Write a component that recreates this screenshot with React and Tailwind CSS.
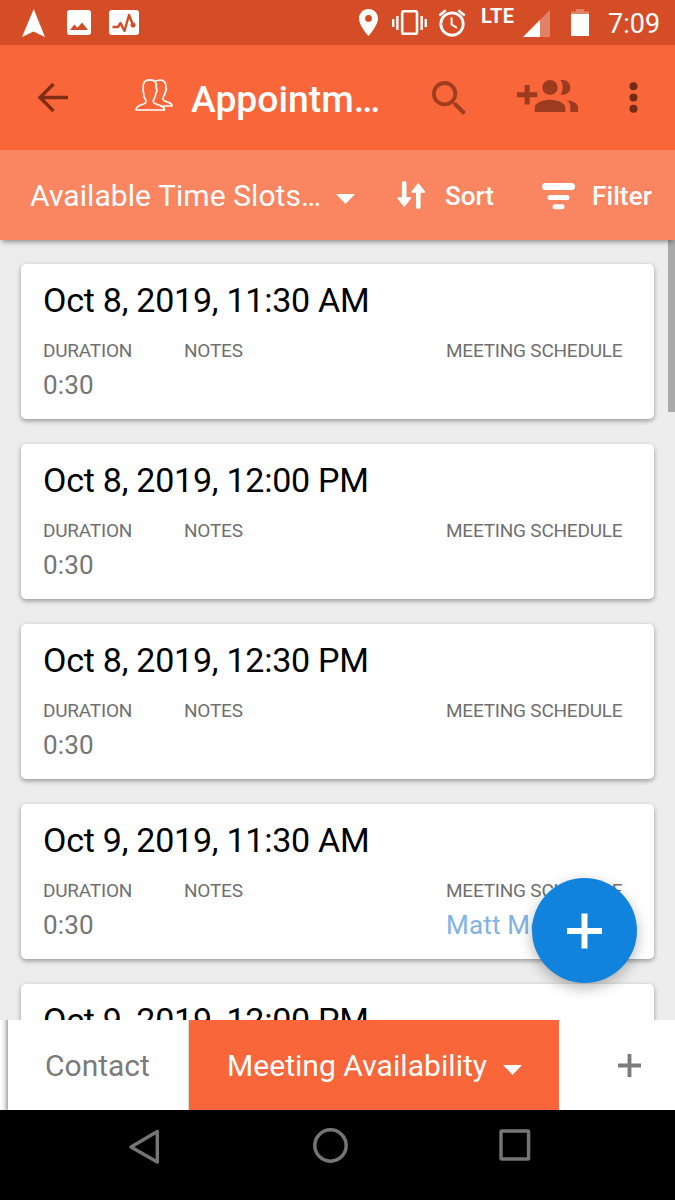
import React from "react";

const slots = [
  { title: "Oct 8, 2019, 11:30 AM", duration: "0:30" },
  { title: "Oct 8, 2019, 12:00 PM", duration: "0:30" },
  { title: "Oct 8, 2019, 12:30 PM", duration: "0:30" },
  { title: "Oct 9, 2019, 11:30 AM", duration: "0:30", schedule: "Matt Mo" },
  { title: "Oct 9, 2019, 12:00 PM" },
];

function StatusBar() {
  return (
    <div className="flex h-[45px] shrink-0 items-start bg-[#d54d26] text-white">
      <svg className="ml-[22px] mt-[9px] shrink-0" width="23" height="28" viewBox="0 0 23 28">
        <path d="M11.7 0L23 28L11.5 22.6L0 28Z" fill="currentColor" />
      </svg>
      <svg className="ml-[22px] mt-[10px] shrink-0" width="24" height="25" viewBox="0 0 24 25">
        <rect width="24" height="25" rx="3" fill="currentColor" />
        <path d="M3 20L7.3 14.6L10.6 17.8L15 12.6L21 20Z" fill="#d54d26" />
      </svg>
      <svg className="ml-[18px] mt-[10px] shrink-0" width="30" height="25" viewBox="0 0 30 25">
        <rect width="30" height="25" rx="3" fill="currentColor" />
        <path d="M3.5 17H9L11.5 13L15.5 21L20 5L24 15" fill="none" stroke="#d54d26" strokeWidth="2.4" strokeLinejoin="round" />
        <circle cx="24" cy="15" r="2.5" fill="#d54d26" />
      </svg>
      <svg className="ml-[220px] mt-[9px] shrink-0" width="19" height="27" viewBox="5 2 14 20" preserveAspectRatio="none">
        <path d="M12 2C8.13 2 5 5.13 5 9c0 5.25 7 13 7 13s7-7.75 7-13c0-3.87-3.13-7-7-7zm0 9.5a2.5 2.5 0 1 1 0-5 2.5 2.5 0 0 1 0 5z" fill="currentColor" />
      </svg>
      <svg className="ml-[14px] mt-[10px] shrink-0" width="35" height="25" viewBox="0 0 35 25">
        <rect x="10.2" y="1.2" width="14.8" height="22.6" rx="1.6" fill="none" stroke="currentColor" strokeWidth="2.6" />
        <path d="M1.2 9V17M5.4 6V20M29.7 6V20M33.8 9V17" stroke="currentColor" strokeWidth="2.4" />
      </svg>
      <svg className="ml-[11px] mt-[9px] shrink-0" width="28" height="28" viewBox="0 0 28 28">
        <circle cx="14" cy="15" r="11.2" fill="none" stroke="currentColor" strokeWidth="2.8" />
        <path d="M1.3 6.5L7.8 1.2M26.7 6.5L20.2 1.2" stroke="currentColor" strokeWidth="2.5" />
        <path d="M13.6 8.5V15.5L19 18.8" fill="none" stroke="currentColor" strokeWidth="2" />
      </svg>
      <span className="ml-[15px] mt-[6px] w-[42px] shrink-0 whitespace-nowrap text-[20px] font-bold leading-[21px] tracking-[0.4px]">LTE</span>
      <svg className="mt-[10px] shrink-0" width="27" height="27" viewBox="0 0 27 27">
        <path d="M27 0V27H0Z" fill="#fff" fillOpacity="0.3" />
        <path d="M17 10V27H0Z" fill="currentColor" />
      </svg>
      <svg className="ml-[21px] mt-[9px] shrink-0" width="18" height="27" viewBox="0 0 18 27">
        <path d="M5 0H13V2.5H18V5H0V2.5H5Z" fill="#fff" fillOpacity="0.3" />
        <path d="M0 5H18V27H0Z" fill="currentColor" />
      </svg>
      <span className="ml-[19px] mt-[9px] whitespace-nowrap text-[27px] leading-[30px]">7:09</span>
    </div>
  );
}

function AppBar() {
  return (
    <div className="flex h-[105px] shrink-0 items-start bg-[#f8663a]">
      <svg className="ml-[37px] mt-[38px] shrink-0" width="31" height="29" viewBox="0 0 31 29">
        <path d="M31 14.5H3M16.5 1L3 14.5L16.5 28" fill="none" stroke="#812d14" strokeWidth="3.4" />
      </svg>
      <svg className="ml-[66px] mt-[33px] shrink-0" width="40" height="35" viewBox="0 0 40 35" fill="none" stroke="#fff" strokeWidth="1.7" strokeLinejoin="round">
        <path d="M2 32C2 29 4 27.500 9.500 26C12.500 25 12.500 23 11 20.500C9.400 19 9.500 17 9.700 15C8.300 13 9 11.500 9.300 10C8.800 4.500 11 1.800 15.700 1.800C21 1.800 23 4.500 22.300 10C23.200 11.500 23 14 21.800 15C21.800 17 21.500 19 20.200 20.500C18.500 23 19 25 22 26C28 27.800 30.500 29 30.500 32Z" />
        <path d="M21 3.500C22.500 2.500 24 2 26 2C30.500 2 32.300 5 31.800 9.500C32.500 11 32.300 13 31.200 14C31.200 16 30.500 17.500 29.500 18.500C28.300 21 29 22.500 32 23.500C36 24.800 38 25.500 38 28H29" />
      </svg>
      <span className="ml-[17px] mt-[33px] w-[241px] shrink-0 whitespace-nowrap text-[37.300px] font-medium leading-[42px] text-white">Appointm…</span>
      <svg className="mt-[36px] shrink-0" width="34" height="34" viewBox="3 3 17.49 17.49">
        <path d="M15.5 14h-.79l-.28-.27A6.471 6.471 0 0 0 16 9.5 6.500 6.500 0 1 0 9.500 16c1.610 0 3.090-.59 4.230-1.570l.27.28v.79l5 4.990L20.490 19l-4.990-5zm-6 0C7.010 14 5 11.990 5 9.500S7.010 5 9.500 5 14 7.010 14 9.500 11.990 14 9.500 14z" fill="#a13c1e" />
      </svg>
      <svg className="ml-[51px] mt-[35px] shrink-0" width="61" height="32" viewBox="0 5 24 13" preserveAspectRatio="none">
        <path d="M8 10H5V7H3v3H0v2h3v3h2v-3h3v-2zm10 1c1.66 0 2.99-1.34 2.99-3S19.66 5 18 5c-.32 0-.63.05-.91.14.57.81.9 1.79.9 2.86s-.34 2.04-.9 2.86c.28.09.59.14.91.14zm-5 0c1.66 0 2.99-1.34 2.99-3S14.66 5 13 5c-1.66 0-3 1.34-3 3s1.34 3 3 3zm6.62 2.16c.83.73 1.38 1.66 1.38 2.84v2h3v-2c0-1.54-2.37-2.49-4.38-2.84zM13 13c-2 0-6 1-6 3v2h12v-2c0-2-4-3-6-3z" fill="#9b3c20" />
      </svg>
      <svg className="ml-[51px] mt-[37px] shrink-0" width="9" height="32" viewBox="0 0 9 32" fill="#742b16">
        <circle cx="4.500" cy="4.200" r="4" />
        <circle cx="4.500" cy="15.500" r="4" />
        <circle cx="4.500" cy="26.800" r="4" />
      </svg>
    </div>
  );
}

function Caret({ className }) {
  return (
    <svg className={className} width="19" height="10" viewBox="0 0 19 10">
      <path d="M0 0H19L9.500 10Z" fill="#fff" />
    </svg>
  );
}

function ViewBar() {
  return (
    <div className="relative z-10 flex h-[90px] shrink-0 items-start bg-[#f98561] text-white shadow-[0_4px_5px_-2px_rgba(0,0,0,0.4)]">
      <span className="ml-[30px] mt-[28px] w-[306px] shrink-0 whitespace-nowrap text-[30px] leading-[36px] tracking-[0.07px]">Available Time Slots…</span>
      <Caret className="mt-[44px] shrink-0" />
      <svg className="ml-[42px] mt-[31px] shrink-0" width="28" height="28" viewBox="0 0 28 28">
        <path d="M7.200 2.300V20M21.300 9V25.700" stroke="#fff" strokeWidth="4.600" strokeLinecap="round" />
        <path d="M1 17H13.500L7.200 25Z M15 11H27.600L21.300 3Z" fill="#fff" stroke="#fff" strokeWidth="1.400" strokeLinejoin="round" />
      </svg>
      <span className="ml-[20px] mt-[30px] w-[97px] shrink-0 whitespace-nowrap text-[26px] font-medium leading-[32px]">Sort</span>
      <svg className="mt-[33px] shrink-0" width="33" height="27" viewBox="0 0 33 27" fill="#fff">
        <rect width="33" height="7" rx="3.500" />
        <rect x="5.500" y="12" width="22" height="5" rx="2.500" />
        <rect x="10.500" y="21.200" width="12" height="5" rx="2.500" />
      </svg>
      <span className="ml-[17px] mt-[30px] whitespace-nowrap text-[26px] font-medium leading-[32px] tracking-[0.1px]">Filter</span>
    </div>
  );
}

function Field({ label, value, width, link }) {
  return (
    <div className={width}>
      <div className="whitespace-nowrap text-[19px] leading-[24px] tracking-[-0.22px] text-[#707070]">{label}</div>
      <div className={"mt-[6px] h-[32px] whitespace-nowrap text-[26px] leading-[32px] tracking-[0.2px] " + (link ? "text-[#82b2e4]" : "text-[#757575]")}>{value}</div>
    </div>
  );
}

function SlotCard({ slot }) {
  return (
    <div className="h-[155px] shrink-0 rounded-[5px] bg-white pl-[22px] pt-[16px] shadow-[0_2px_5px_rgba(0,0,0,0.36)]">
      <div className="whitespace-nowrap text-[34px] leading-[40px] tracking-[-0.24px] text-black">{slot.title}</div>
      {slot.duration && (
        <div className="mt-[19px] flex">
          <Field label="DURATION" value={slot.duration} width="w-[141px]" />
          <Field label="NOTES" value="" width="w-[262px]" />
          <Field label="MEETING SCHEDULE" value={slot.schedule} width="w-[190px]" link />
        </div>
      )}
    </div>
  );
}

function TabBar() {
  return (
    <div className="flex h-[90px] shrink-0 bg-white">
      <div className="w-[8px] bg-linear-to-r from-white via-[#eeeeee] to-[#aaaaaa]" />
      <div className="w-[181px] border-r border-[#d8d8d8] pl-[37px] pt-[28px] text-[30px] leading-[36px] text-[#7b7b7b]">Contact</div>
      <div className="flex w-[370px] items-start bg-[#f8663a] pl-[38px] pt-[28px] text-white">
        <span className="w-[276px] shrink-0 whitespace-nowrap text-[30px] leading-[36px] tracking-[0.05px]">Meeting Availability</span>
        <Caret className="mt-[17px] shrink-0" />
      </div>
      <svg className="ml-[59px] mt-[34px] shrink-0" width="23" height="23" viewBox="0 0 23 23">
        <path d="M0 11.500H23M11.500 0V23" stroke="#7b7b7b" strokeWidth="3.800" />
      </svg>
    </div>
  );
}

function NavBar() {
  return (
    <div className="flex h-[90px] shrink-0 items-start bg-black">
      <svg className="ml-[129px] mt-[19px] shrink-0" width="31" height="36" viewBox="0 0 31 36">
        <path d="M28.300 2.500V33L2 18Z" fill="none" stroke="#757575" strokeWidth="3.400" strokeLinejoin="round" />
      </svg>
      <svg className="ml-[153px] mt-[18px] shrink-0" width="35" height="35" viewBox="0 0 35 35">
        <circle cx="17.500" cy="17.500" r="15.700" fill="none" stroke="#757575" strokeWidth="3.500" />
      </svg>
      <svg className="ml-[151px] mt-[19px] shrink-0" width="32" height="33" viewBox="0 0 32 33">
        <rect x="2" y="2" width="27.600" height="28" rx="0.800" fill="none" stroke="#757575" strokeWidth="3.400" />
      </svg>
    </div>
  );
}

export default function App() {
  return (
    <div className="flex h-[1200px] w-[675px] flex-col overflow-hidden bg-white font-['Roboto',sans-serif]">
      <StatusBar />
      <AppBar />
      <ViewBar />
      <main className="relative h-[780px] shrink-0 overflow-hidden bg-[#ededee]">
        <div className="flex flex-col gap-[25px] pl-[21px] pr-[21px] pt-[24px]">
          {slots.map((slot) => (
            <SlotCard key={slot.title} slot={slot} />
          ))}
        </div>
        <div className="absolute right-0 top-0 h-[172px] w-[7px] bg-[#a9a9a9]" />
        <button className="absolute left-[532px] top-[638px] flex h-[105px] w-[105px] items-center justify-center rounded-full bg-[#1283dc] shadow-[0_5px_14px_rgba(0,0,0,0.28)]">
          <svg width="36" height="36" viewBox="0 0 36 36">
            <path d="M0 18H35M17.500 0.500V35.500" stroke="#fff" strokeWidth="6" />
          </svg>
        </button>
      </main>
      <TabBar />
      <NavBar />
    </div>
  );
}
